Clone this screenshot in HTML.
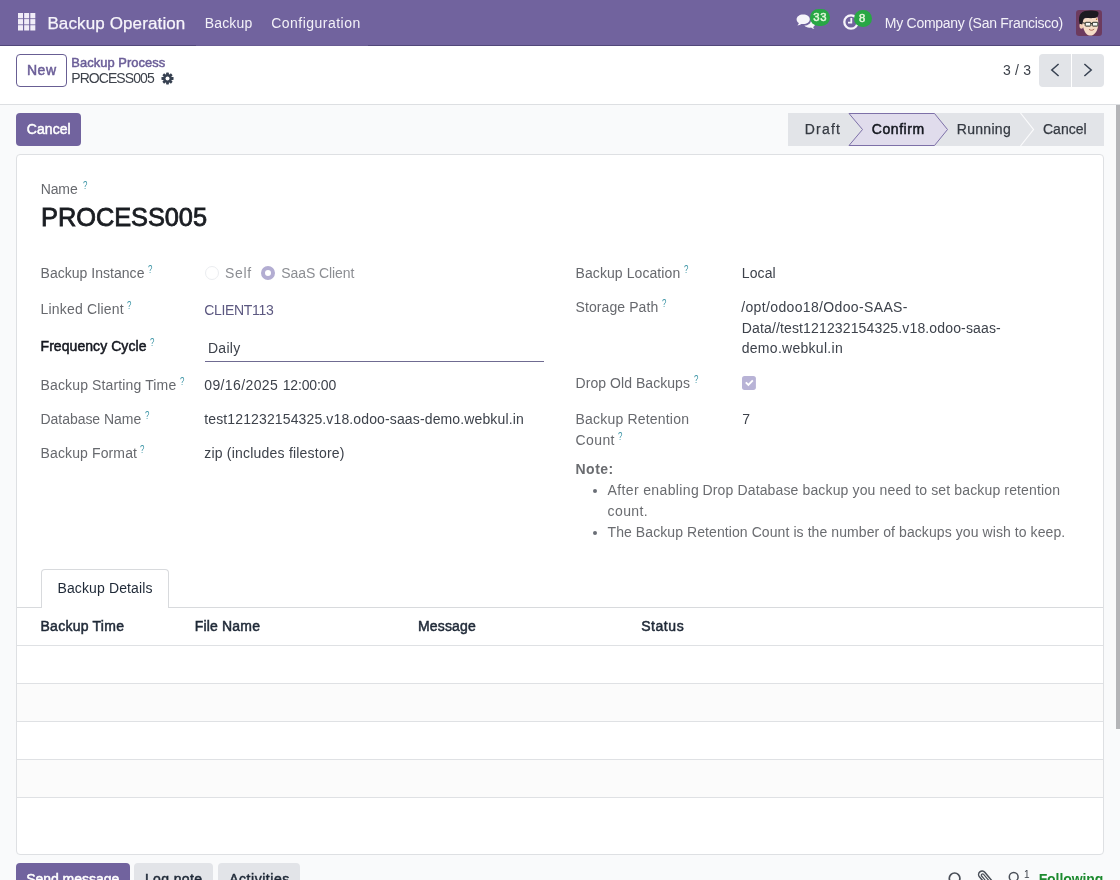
<!DOCTYPE html>
<html lang="en"><head><meta charset="utf-8"><title>Backup Process - PROCESS005</title>
<style>
html,body{margin:0;padding:0;background:#f9fafb;}
body{width:1120px;height:880px;overflow:hidden;font-family:"Liberation Sans",sans-serif;}
#app{will-change:transform;position:relative;width:1120px;height:880px;overflow:hidden;background:#f9fafb;}
#app *{box-sizing:border-box;}
.a{position:absolute;}
.t{position:absolute;white-space:pre;line-height:1;font-family:"Liberation Sans",sans-serif;}
.q{font-size:11px;color:#3d95a6;transform:scaleX(0.72);transform-origin:0 0;}
.nav{left:0;top:0;width:1120px;height:46px;background:#71639e;}
.cp{left:0;top:46px;width:1120px;height:59px;background:#fff;border-bottom:1px solid #dddfe2;}
.btn{border-radius:4px;}
.sheet{left:16px;top:154px;width:1088px;height:701px;background:#fff;border:1px solid #dee0e3;border-radius:4px;}
.hl{height:1px;background:#dfe1e4;}

</style></head>
<body>
<div id="app">
<div class="a nav"></div>
<div class="a" style="left:0;top:45px;width:1120px;height:1px;background:#695c93"></div>
<div class="a" style="left:0;top:45px;width:196px;height:1px;background:#51477a"></div>
<div class="a" style="left:368px;top:45px;width:752px;height:1px;background:#51477a"></div>
<!-- apps icon -->
<svg class="a" style="left:17.800px;top:13.100px" width="18" height="18" viewBox="0 0 18 18"><g fill="#f1edf8"><rect x="0" y="0" width="5" height="5.300"/><rect x="6.15" y="0" width="5" height="5.300"/><rect x="12.3" y="0" width="5" height="5.300"/><rect x="0" y="6.1" width="5" height="5.300"/><rect x="6.15" y="6.1" width="5" height="5.300"/><rect x="12.3" y="6.1" width="5" height="5.300"/><rect x="0" y="12.2" width="5" height="5.300"/><rect x="6.15" y="12.2" width="5" height="5.300"/><rect x="12.3" y="12.2" width="5" height="5.300"/></g></svg>
<!-- chat icon -->
<svg class="a" style="left:796px;top:14px" width="20" height="17" viewBox="0 0 20 17"><g fill="#f6f4fa"><path d="M7.2 0.6C3.4 0.6 0.6 2.7 0.6 5.4c0 1.5 0.9 2.8 2.3 3.7-0.2 0.9-0.8 1.7-1.5 2.3 1.5-0.1 2.9-0.7 3.9-1.5 0.6 0.1 1.2 0.2 1.9 0.2 3.7 0 6.6-2.1 6.6-4.8S10.9 0.6 7.2 0.6z"/><path d="M15 6.2c0.1 2.9-2.6 5.2-6.6 5.4 1 1.3 2.9 2.1 5 2.1 0.6 0 1.100-0.100 1.600-0.200 0.900 0.800 2.100 1.300 3.400 1.400-0.600-0.500-1.100-1.200-1.300-2 1.200-0.700 2-1.800 2-3 0-1.700-1.700-3.200-4.100-3.700z"/></g></svg>
<div class="a" style="left:809.5px;top:9px;width:20.5px;height:16.5px;border-radius:9px;background:#28a745"></div>
<!-- clock icon -->
<svg class="a" style="left:842px;top:13px" width="18" height="18" viewBox="0 0 18 18"><circle cx="9" cy="9" r="6.700" fill="none" stroke="#f6f4fa" stroke-width="2.300"/><path d="M9.300 5v4.700H6" fill="none" stroke="#f6f4fa" stroke-width="1.800"/></svg>
<div class="a" style="left:854px;top:10px;width:17.5px;height:16.5px;border-radius:9px;background:#28a745"></div>
<!-- avatar -->
<svg class="a" style="left:1076px;top:10px" width="26" height="26" viewBox="0 0 26 26"><defs><clipPath id="av"><rect width="26" height="26" rx="3.200"/></clipPath></defs><g clip-path="url(#av)"><rect width="26" height="26" fill="#6d3b5e"/>
<ellipse cx="5.400" cy="15.800" rx="1.900" ry="3" fill="#f0cdb6"/>
<path d="M6.300 8.500C6 14 7.500 21 10.500 24c1.800 1.800 4.500 2 6.500 1 3-1.500 5-6 5.300-10.500 0.200-3-0.300-5.500-1-7.500z" fill="#f6dcc6"/>
<path d="M3.400 13.500C2.600 9 3 5.500 4.800 3.500 7 0.800 12 0.400 16 0.600c3 0.100 5.800 0.500 6.400 2 0.500 1.500-0.400 3.700-1.400 4.700-3.500 1.300-8.500 0.800-11.500 0.500-1.300 0.300-2 1.500-2.500 3.200-0.300 1.200-0.500 2.500-0.800 3.500-1.200-0.200-2.300-0.400-2.800-1z" fill="#1d1a20"/>
<rect x="9.200" y="12.300" width="5.600" height="3.800" rx="0.700" fill="#f4f6f4" stroke="#2c3028" stroke-width="1"/><rect x="16.300" y="12.300" width="5.600" height="3.800" rx="0.700" fill="#f4f6f4" stroke="#2c3028" stroke-width="1"/><path d="M14.800 13.500h1.500M9.200 13.300l-2.700-0.600" stroke="#2c3028" stroke-width="1" fill="none"/>
<path d="M13 19.300c1.400 1.300 3.700 1.300 5.200-0.200" fill="none" stroke="#a5614e" stroke-width="0.900"/>
<circle cx="20.600" cy="9.300" r="0.700" fill="#b5651d"/>
</g></svg>

<div class="a cp"></div>
<div class="a btn" style="left:16px;top:54px;width:51px;height:33px;border:1px solid #685e93;background:#fff"></div>
<!-- gear -->
<svg class="a" style="left:161.400px;top:71.600px" width="13" height="13" viewBox="0 0 14 14"><g transform="translate(7 7)"><g fill="#374151"><rect x="-1.500" y="-6.500" width="3" height="13" rx="0.500"/><rect x="-1.500" y="-6.500" width="3" height="13" rx="0.500" transform="rotate(45)"/><rect x="-1.500" y="-6.500" width="3" height="13" rx="0.500" transform="rotate(90)"/><rect x="-1.500" y="-6.500" width="3" height="13" rx="0.500" transform="rotate(135)"/><circle r="4.700"/></g><circle r="2.100" fill="#fff"/></g></svg>
<!-- pager -->
<div class="a" style="left:1039px;top:54px;width:32px;height:33px;background:#e2e4e8;border-radius:4px 0 0 4px"></div>
<div class="a" style="left:1072px;top:54px;width:32px;height:33px;background:#e2e4e8;border-radius:0 4px 4px 0"></div>
<svg class="a" style="left:1049px;top:62px" width="12" height="16" viewBox="0 0 12 16"><path d="M9.600 2L2.800 8l6.800 6" fill="none" stroke="#374151" stroke-width="1.500"/></svg>
<svg class="a" style="left:1082px;top:62px" width="12" height="16" viewBox="0 0 12 16"><path d="M2.400 2l6.800 6-6.800 6" fill="none" stroke="#374151" stroke-width="1.500"/></svg>

<!-- action bar -->
<div class="a btn" style="left:16px;top:113px;width:65px;height:33px;background:#71639e"></div>
<!-- status bar -->
<svg class="a" style="left:787px;top:112px" width="318" height="35" viewBox="0 0 318 35">
<rect x="1" y="1" width="316" height="33" fill="#e2e4e8"/>
<path d="M62 1.500H147.500L160.500 17.500L147.500 33.500H62L75.500 17.500Z" fill="#e0dcec" stroke="#7d70a8" stroke-width="1"/>
<path d="M233.500 1L246.500 17.500L233.500 34" fill="none" stroke="#fbfbfc" stroke-width="1.200"/>
</svg>

<div class="a sheet"></div>
<!-- radios -->
<div class="a" style="left:205px;top:266px;width:14px;height:14px;border-radius:50%;background:#fff;border:1px solid #ebedf0"></div>
<div class="a" style="left:260.500px;top:266px;width:14px;height:14px;border-radius:50%;background:#fff;border:4px solid #b3add2"></div>
<!-- input underline -->
<div class="a" style="left:205px;top:361px;width:339px;height:1px;background:#6f6b91"></div>
<!-- checkbox -->
<svg class="a" style="left:742px;top:376px" width="15" height="15" viewBox="0 0 15 15"><rect x="0" y="0" width="13.900" height="13.900" rx="2.600" fill="#b8b3d6"/><path d="M4.400 6.900l2 2 3.800-3.900" fill="none" stroke="#fff" stroke-width="1.800" stroke-linecap="square" stroke-linejoin="miter"/></svg>
<!-- bullets -->
<div class="a" style="left:592.800px;top:488.800px;width:4.400px;height:4.400px;border-radius:50%;background:#6a6e76"></div>
<div class="a" style="left:592.800px;top:530.700px;width:4.400px;height:4.400px;border-radius:50%;background:#6a6e76"></div>
<!-- notebook -->
<div class="a hl" style="left:17px;top:607px;width:1086px;background:#d8dadd"></div>
<div class="a" style="left:41px;top:569px;width:128px;height:39px;background:#fff;border:1px solid #d8dadd;border-bottom:none;border-radius:4px 4px 0 0"></div>
<div class="a hl" style="left:17px;top:645px;width:1086px"></div>
<div class="a" style="left:17px;top:684px;width:1086px;height:37px;background:#fbfbfb"></div>
<div class="a" style="left:17px;top:760px;width:1086px;height:37px;background:#fbfbfb"></div>
<div class="a hl" style="left:17px;top:683px;width:1086px"></div>
<div class="a hl" style="left:17px;top:721px;width:1086px"></div>
<div class="a hl" style="left:17px;top:759px;width:1086px"></div>
<div class="a hl" style="left:17px;top:797px;width:1086px"></div>
<!-- chatter -->
<div class="a btn" style="left:16px;top:863px;width:114px;height:33px;background:#71639e"></div>
<div class="a btn" style="left:134px;top:863px;width:79px;height:33px;background:#e2e4e8"></div>
<div class="a btn" style="left:217.500px;top:863px;width:82px;height:33px;background:#e2e4e8"></div>
<svg class="a" style="left:947px;top:871.300px" width="16" height="16" viewBox="0 0 16 16"><circle cx="7.600" cy="7.300" r="5.300" fill="none" stroke="#4a4f58" stroke-width="1.700"/></svg>
<svg class="a" style="left:976px;top:869px" width="18" height="18" viewBox="0 0 18 18"><g transform="rotate(-40 9 9)"><rect x="5.500" y="1" width="7" height="18" rx="3.500" fill="none" stroke="#4a4f58" stroke-width="1.500"/><rect x="7.700" y="4" width="2.600" height="12" rx="1.300" fill="none" stroke="#4a4f58" stroke-width="1.200"/></g></svg>
<svg class="a" style="left:1007px;top:871.200px" width="14" height="14" viewBox="0 0 14 14"><circle cx="6.700" cy="5.900" r="4.400" fill="none" stroke="#4a4f58" stroke-width="1.500"/><path d="M0.500 15c0-3.500 2.500-5.200 6.200-5.200s6.200 1.700 6.200 5.200" fill="none" stroke="#4a4f58" stroke-width="1.500"/></svg>
<!-- scrollbar -->
<div class="a" style="left:1116px;top:105px;width:4px;height:624px;background:#b4b5b8"></div>

<span class="t" style="left:47.42px;top:14.91px;font-size:17px;letter-spacing:0.122px;color:#f7f5fb;-webkit-text-stroke:0.25px;">Backup Operation</span>
<span class="t" style="left:204.74px;top:15.75px;font-size:14px;letter-spacing:0.151px;color:#f3f1f8;">Backup</span>
<span class="t" style="left:271.24px;top:15.75px;font-size:14px;letter-spacing:0.473px;color:#f3f1f8;">Configuration</span>
<span class="t" style="left:884.84px;top:15.95px;font-size:14px;letter-spacing:-0.272px;color:#f3f1f8;">My Company (San Francisco)</span>
<span class="t" style="left:26.94px;top:63.15px;font-size:14px;letter-spacing:0.572px;color:#6b5e98;-webkit-text-stroke:0.5px;">New</span>
<span class="t" style="left:71.28px;top:56.78px;font-size:12.9px;letter-spacing:0.062px;color:#6b5e98;-webkit-text-stroke:0.5px;">Backup Process</span>
<span class="t" style="left:71.24px;top:71.15px;font-size:14px;letter-spacing:-0.930px;color:#3d424b;">PROCESS005</span>
<span class="t" style="left:1002.99px;top:62.95px;font-size:14px;letter-spacing:0.178px;color:#3d424b;">3 / 3</span>
<span class="t" style="left:26.74px;top:121.95px;font-size:14px;letter-spacing:0.073px;color:#ffffff;-webkit-text-stroke:0.5px;">Cancel</span>
<span class="t" style="left:804.74px;top:121.75px;font-size:14px;letter-spacing:1.204px;color:#353a42;-webkit-text-stroke:0.25px;">Draft</span>
<span class="t" style="left:871.84px;top:121.75px;font-size:14px;letter-spacing:0.541px;color:#14171f;-webkit-text-stroke:0.5px;">Confirm</span>
<span class="t" style="left:956.74px;top:121.75px;font-size:14px;letter-spacing:0.301px;color:#353a42;-webkit-text-stroke:0.25px;">Running</span>
<span class="t" style="left:1042.94px;top:121.75px;font-size:14px;letter-spacing:0.033px;color:#353a42;-webkit-text-stroke:0.25px;">Cancel</span>
<span class="t" style="left:40.74px;top:181.95px;font-size:14px;letter-spacing:-0.133px;color:#67696e;">Name</span>
<span class="t" style="left:41.08px;top:205.00px;font-size:25.4px;letter-spacing:-0.061px;color:#1a1d22;-webkit-text-stroke:0.8px;">PROCESS005</span>
<span class="t" style="left:40.54px;top:266.15px;font-size:14px;letter-spacing:0.028px;color:#67696e;">Backup Instance</span>
<span class="t" style="left:40.54px;top:301.95px;font-size:14px;letter-spacing:0.185px;color:#67696e;">Linked Client</span>
<span class="t" style="left:40.54px;top:339.45px;font-size:14px;letter-spacing:0.062px;color:#14171f;-webkit-text-stroke:0.5px;">Frequency Cycle</span>
<span class="t" style="left:40.54px;top:378.15px;font-size:14px;letter-spacing:0.137px;color:#67696e;">Backup Starting Time</span>
<span class="t" style="left:40.54px;top:412.15px;font-size:14px;letter-spacing:-0.043px;color:#67696e;">Database Name</span>
<span class="t" style="left:40.54px;top:446.45px;font-size:14px;letter-spacing:0.123px;color:#67696e;">Backup Format</span>
<span class="t" style="left:224.99px;top:266.15px;font-size:14px;letter-spacing:0.695px;color:#8c8e93;">Self</span>
<span class="t" style="left:281.24px;top:266.15px;font-size:14px;letter-spacing:-0.073px;color:#8c8e93;">SaaS Client</span>
<span class="t" style="left:204.24px;top:303.15px;font-size:14px;letter-spacing:-0.331px;color:#5c5880;">CLIENT113</span>
<span class="t" style="left:207.99px;top:341.15px;font-size:14px;letter-spacing:0.271px;color:#3d424b;">Daily</span>
<span class="t" style="left:204.24px;top:378.15px;font-size:14px;letter-spacing:0.387px;color:#3d424b;">09/16/2025</span>
<span class="t" style="left:282.64px;top:378.15px;font-size:14px;letter-spacing:-0.134px;color:#3d424b;">12:00:00</span>
<span class="t" style="left:204.24px;top:412.15px;font-size:14px;letter-spacing:0.132px;color:#3d424b;">test121232154325.v18.odoo-saas-demo.webkul.in</span>
<span class="t" style="left:204.24px;top:446.45px;font-size:14px;letter-spacing:0.210px;color:#3d424b;">zip (includes filestore)</span>
<span class="t" style="left:575.54px;top:266.15px;font-size:14px;letter-spacing:0.081px;color:#67696e;">Backup Location</span>
<span class="t" style="left:575.54px;top:300.15px;font-size:14px;letter-spacing:0.084px;color:#67696e;">Storage Path</span>
<span class="t" style="left:575.54px;top:375.75px;font-size:14px;letter-spacing:0.053px;color:#67696e;">Drop Old Backups</span>
<span class="t" style="left:575.54px;top:411.95px;font-size:14px;letter-spacing:0.192px;color:#67696e;">Backup Retention</span>
<span class="t" style="left:575.54px;top:432.75px;font-size:14px;letter-spacing:0.388px;color:#67696e;">Count</span>
<span class="t" style="left:741.74px;top:266.15px;font-size:14px;letter-spacing:0.123px;color:#3d424b;">Local</span>
<span class="t" style="left:741.24px;top:300.15px;font-size:14px;letter-spacing:0.354px;color:#3d424b;">/opt/odoo18/Odoo-SAAS-</span>
<span class="t" style="left:741.74px;top:320.75px;font-size:14px;letter-spacing:0.145px;color:#3d424b;">Data//test121232154325.v18.odoo-saas-</span>
<span class="t" style="left:741.74px;top:341.35px;font-size:14px;letter-spacing:0.283px;color:#3d424b;">demo.webkul.in</span>
<span class="t" style="left:742.24px;top:412.15px;font-size:14px;letter-spacing:-0.087px;color:#3d424b;">7</span>
<span class="t" style="left:575.54px;top:461.95px;font-size:14px;letter-spacing:0.470px;color:#6a6c70;font-weight:bold;">Note:</span>
<span class="t" style="left:607.54px;top:483.15px;font-size:14px;letter-spacing:0.366px;color:#6a6c70;">After enabling</span>
<span class="t" style="left:702.54px;top:483.15px;font-size:14px;letter-spacing:0.138px;color:#6a6c70;">Drop Database backup you need to set backup retention</span>
<span class="t" style="left:607.54px;top:503.95px;font-size:14px;letter-spacing:0.404px;color:#6a6c70;">count.</span>
<span class="t" style="left:607.54px;top:524.95px;font-size:14px;letter-spacing:0.081px;color:#6a6c70;">The Backup Retention Count is the number of backups you wish to keep.</span>
<span class="t" style="left:57.49px;top:581.15px;font-size:14px;letter-spacing:0.121px;color:#1f2937;">Backup Details</span>
<span class="t" style="left:40.54px;top:619.45px;font-size:14px;letter-spacing:0.247px;color:#1f2937;-webkit-text-stroke:0.5px;">Backup Time</span>
<span class="t" style="left:194.74px;top:619.45px;font-size:14px;letter-spacing:0.177px;color:#1f2937;-webkit-text-stroke:0.5px;">File Name</span>
<span class="t" style="left:417.99px;top:619.45px;font-size:14px;letter-spacing:0.150px;color:#1f2937;-webkit-text-stroke:0.5px;">Message</span>
<span class="t" style="left:641.14px;top:619.45px;font-size:14px;letter-spacing:0.571px;color:#1f2937;-webkit-text-stroke:0.5px;">Status</span>
<span class="t" style="left:26.24px;top:872.15px;font-size:14px;letter-spacing:-0.041px;color:#ffffff;-webkit-text-stroke:0.5px;">Send message</span>
<span class="t" style="left:144.94px;top:872.15px;font-size:14px;letter-spacing:0.380px;color:#1f2937;-webkit-text-stroke:0.5px;">Log note</span>
<span class="t" style="left:229.24px;top:872.15px;font-size:14px;letter-spacing:0.525px;color:#1f2937;-webkit-text-stroke:0.5px;">Activities</span>
<span class="t" style="left:1038.64px;top:872.15px;font-size:14px;letter-spacing:-0.071px;color:#1c8a2e;font-weight:bold;">Following</span>
<span class="t" style="left:1024.10px;top:869.74px;font-size:10px;letter-spacing:-0.762px;color:#3d424b;">1</span>
<span class="t" style="left:813.35px;top:11.63px;font-size:11.3px;letter-spacing:0.639px;color:#e2f7da;-webkit-text-stroke:0.5px;">33</span>
<span class="t" style="left:858.95px;top:12.63px;font-size:11.3px;letter-spacing:0.920px;color:#e2f7da;-webkit-text-stroke:0.5px;">8</span>
<span class="t q" style="left:82.50px;top:179.89px">?</span>
<span class="t q" style="left:147.50px;top:263.89px">?</span>
<span class="t q" style="left:127.00px;top:299.89px">?</span>
<span class="t q" style="left:150.25px;top:336.89px">?</span>
<span class="t q" style="left:179.50px;top:375.89px">?</span>
<span class="t q" style="left:144.50px;top:409.89px">?</span>
<span class="t q" style="left:140.25px;top:443.89px">?</span>
<span class="t q" style="left:683.75px;top:263.89px">?</span>
<span class="t q" style="left:662.00px;top:297.89px">?</span>
<span class="t q" style="left:693.75px;top:373.89px">?</span>
<span class="t q" style="left:618.25px;top:430.89px">?</span>
</div>
</body></html>
